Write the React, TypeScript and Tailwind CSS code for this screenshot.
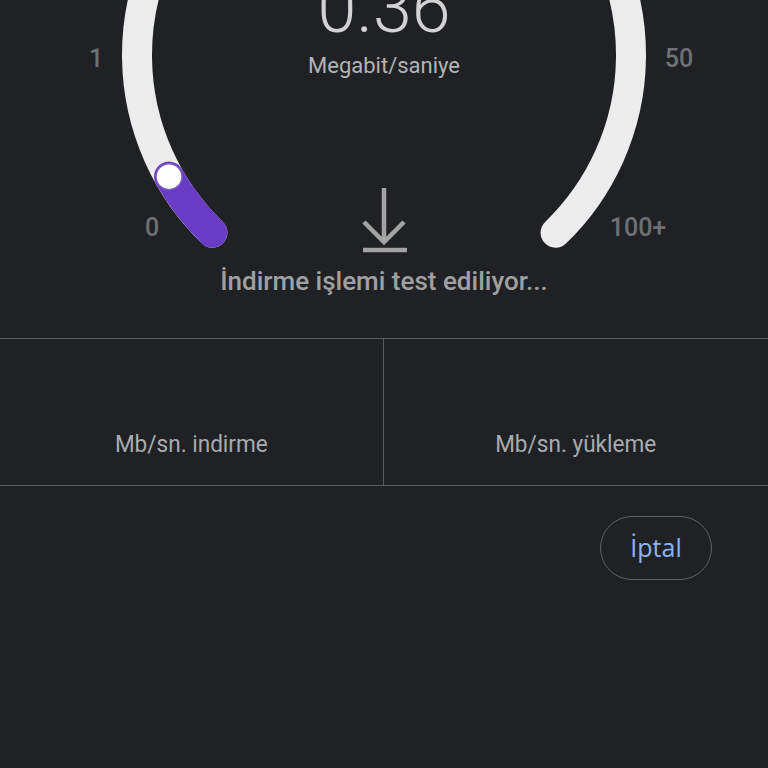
import React from "react";

const CX = 384;
const CY = 55;
const R = 247;
const pt = (deg: number) => {
  const a = (deg * Math.PI) / 180;
  return [CX + R * Math.cos(a), CY + R * Math.sin(a)];
};

function Gauge() {
  const [sx, sy] = pt(134);
  const [ex, ey] = pt(406);
  const [kx, ky] = pt(150.5);
  return (
    <svg width="768" height="338" viewBox="0 0 768 338" className="absolute left-0 top-0">
      <path
        d={`M ${sx} ${sy} A ${R} ${R} 0 1 1 ${ex} ${ey}`}
        fill="none"
        stroke="#ececec"
        strokeWidth="30"
        strokeLinecap="round"
      />
      <path
        d={`M ${sx} ${sy} A ${R} ${R} 0 0 1 ${kx} ${ky}`}
        fill="none"
        stroke="#6a3cc6"
        strokeWidth="30"
        strokeLinecap="round"
      />
      <circle cx={kx} cy={ky} r="13" fill="#ffffff" stroke="#7a5bbf" strokeWidth="1.5" />
      <g fill="#6f7073" fontFamily="Roboto, sans-serif" fontWeight="500" fontSize="25" textAnchor="middle">
        <text x="96" y="67">1</text>
        <text x="679" y="67">50</text>
        <text x="152" y="236">0</text>
        <text x="638" y="236">100+</text>
      </g>
      <g stroke="#a3a3a3" strokeWidth="4.5" fill="none">
        <line x1="384" y1="188" x2="384" y2="242" />
        <polyline points="364,222 384,242 404,222" />
        <line x1="363" y1="250" x2="407" y2="250" />
      </g>
    </svg>
  );
}

export default function App() {
  return (
    <div className="w-[768px] h-[768px] bg-[#202124] overflow-hidden" style={{ fontFamily: "Roboto, sans-serif" }}>
      <div className="relative h-[338px]">
        <Gauge />
        <div className="relative flex flex-col items-center">
          <div className="text-[70px] leading-none font-light text-[#d2d2d2] mt-[-27px]">0.36</div>
          <div className="text-[22px] leading-none text-[#b4b4b4] mt-[12px]">Megabit/saniye</div>
          <div className="text-[26px] leading-none font-medium text-[#a0a0a0] mt-[191px]">İndirme işlemi test ediliyor...</div>
        </div>
      </div>
      <div className="grid grid-cols-2 h-[148px] border-y border-[#5a5c60]">
        <div className="flex items-end justify-center pb-[29px] border-r border-[#5a5c60]">
          <span className="text-[24px] leading-none text-[#a9abae] scale-x-[0.94]">Mb/sn. indirme</span>
        </div>
        <div className="flex items-end justify-center pb-[29px]">
          <span className="text-[24px] leading-none text-[#a9abae] scale-x-[0.94]">Mb/sn. yükleme</span>
        </div>
      </div>
      <div className="flex justify-end pr-[56px] pt-[30px]">
        <button className="w-[112px] h-[64px] rounded-full border border-[#5f6368] text-[#8ab4f8] text-[25px] font-medium" style={{ fontFamily: "'Open Sans', sans-serif" }}>
          İptal
        </button>
      </div>
    </div>
  );
}
